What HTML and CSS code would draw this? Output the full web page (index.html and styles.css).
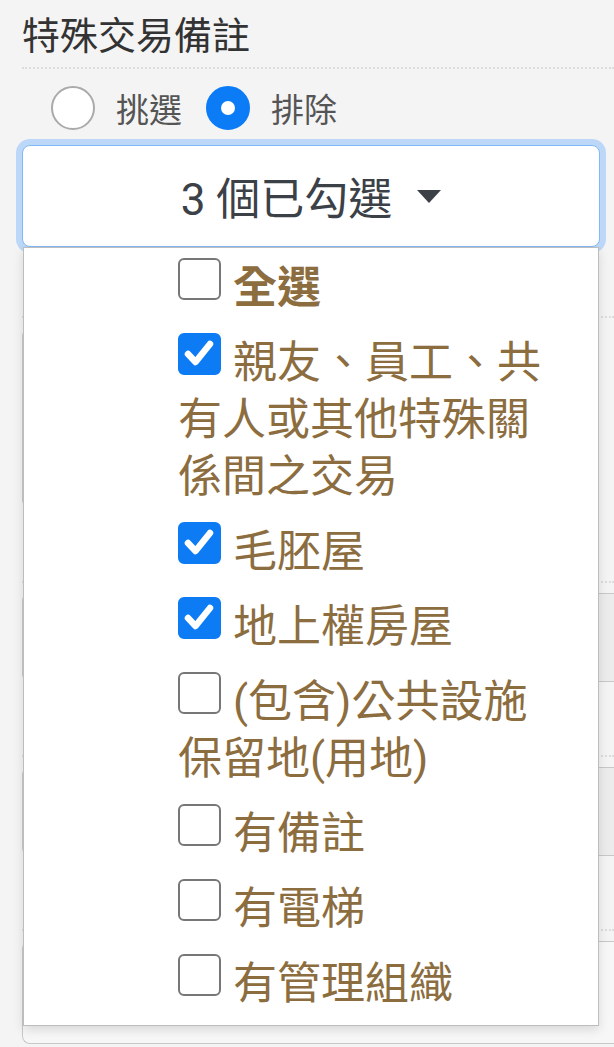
FILE: index.html
```html
<!DOCTYPE html>
<html lang="zh-Hant">
<head>
    <meta charset="UTF-8">
    <meta name="viewport" content="width=device-width, initial-scale=1.0">
    <title>特殊交易備註</title>
    <link rel="stylesheet" href="styles.css">
</head>
<body>
    <div class="page">
        <section class="field">
            <h2 class="field-title">特殊交易備註</h2>
            <div class="radios">
                <label class="radio"><span class="radio-dot"></span>挑選</label>
                <label class="radio"><span class="radio-dot checked"></span>排除</label>
            </div>
            <div class="dropdown">
                <button class="dropdown-toggle">3 個已勾選<span class="caret"></span></button>
                <ul class="dropdown-menu">
                    <li class="item all"><span class="box"></span>全選</li>
                    <li class="item"><span class="box checked"><svg viewBox="0 0 42 42"><polyline points="10,21 17.5,29 32,11"/></svg></span>親友、員工、共有人或其他特殊關係間之交易</li>
                    <li class="item"><span class="box checked"><svg viewBox="0 0 42 42"><polyline points="10,21 17.5,29 32,11"/></svg></span>毛胚屋</li>
                    <li class="item"><span class="box checked"><svg viewBox="0 0 42 42"><polyline points="10,21 17.5,29 32,11"/></svg></span>地上權房屋</li>
                    <li class="item"><span class="box"></span>(包含)公共設施保留地(用地)</li>
                    <li class="item"><span class="box"></span>有備註</li>
                    <li class="item"><span class="box"></span>有電梯</li>
                    <li class="item"><span class="box"></span>有管理組織</li>
                </ul>
            </div>
        </section>

        <section class="field first-below">
            <h2 class="field-title">總價</h2>
            <div class="range">
                <div class="input short"></div>
                <div class="input short"></div>
            </div>
        </section>

        <section class="field">
            <h2 class="field-title">單價</h2>
            <div class="input wide"></div>
        </section>

        <section class="field">
            <h2 class="field-title">建物面積</h2>
            <div class="input wide"></div>
        </section>

        <section class="field">
            <h2 class="field-title">土地面積</h2>
            <div class="input wide last"></div>
        </section>
    </div>
</body>
</html>
```

FILE: styles.css
```css
body {
    margin: 0;
    background: #f4f4f4;
    font-family: Roboto, "Noto Sans CJK TC", sans-serif;
    color: #333;
}
.page {
    padding: 11px 0 0 22px;
    overflow: hidden;
    height: 1047px;
    box-sizing: border-box;
}
.field-title {
    margin: 0;
    font-size: 38px;
    font-weight: normal;
    line-height: 50px;
    padding-bottom: 6px;
    border-bottom: 2px dotted #dcdcdc;
}
.field + .field .field-title {
    margin-top: 17px;
}
.field.first-below .field-title {
    margin-top: 13px;
}
.radios {
    display: flex;
    align-items: center;
    margin: 17px 0 0 29px;
    height: 44px;
}
.radio {
    display: flex;
    align-items: center;
    font-size: 33px;
    color: #555;
    margin-right: 24px;
}
.radio-dot {
    width: 40px;
    height: 40px;
    border: 2px solid #aaa;
    border-radius: 50%;
    background: #fff;
    margin-right: 21px;
    box-sizing: content-box;
}
.radio-dot.checked {
    border-color: #0b7bf6;
    background: #0b7bf6;
    position: relative;
}
.radio-dot.checked::after {
    content: "";
    position: absolute;
    left: 13px;
    top: 13px;
    width: 14px;
    height: 14px;
    border-radius: 50%;
    background: #fff;
}
.dropdown {
    position: relative;
    margin: 15px 14px 0 0;
}
.dropdown-toggle {
    display: flex;
    justify-content: center;
    align-items: center;
    width: 100%;
    height: 102px;
    background: #fff;
    border: 1px solid #80b9f7;
    border-radius: 8px;
    box-shadow: 0 0 0 6px #bcd7f8;
    font-family: inherit;
    font-size: 44px;
    color: #3b4147;
    padding: 0;
}
.caret {
    width: 0;
    height: 0;
    margin-left: 25px;
    border-top: 13px solid #3b4147;
    border-left: 12px solid transparent;
    border-right: 12px solid transparent;
}
.dropdown-menu {
    position: absolute;
    top: 100%;
    left: 1px;
    right: 1px;
    z-index: 2;
    margin: 0;
    padding: 3px 36px 3px 154px;
    list-style: none;
    background: #fff;
    border: 1px solid #bdbdbd;
    box-shadow: 0 4px 10px rgba(0, 0, 0, 0.12);
}
.item {
    padding: 9px 0;
    font-size: 44px;
    line-height: 57px;
    color: #8c6d40;
}
.item.all {
    font-weight: bold;
}
.box {
    display: inline-block;
    width: 43px;
    height: 42px;
    margin-right: 12px;
    vertical-align: -5px;
    transform: translateY(-8px);
    border: 2.5px solid #777;
    border-radius: 6px;
    box-sizing: border-box;
    background: #fff;
}
.box.checked {
    background: #0d7cf4;
    border-color: #0d7cf4;
}
.box svg {
    display: block;
    width: 42px;
    height: 42px;
    margin: -2.5px;
}
.box polyline {
    fill: none;
    stroke: #fff;
    stroke-width: 6.5;
    stroke-linecap: round;
    stroke-linejoin: round;
}
.range {
    display: flex;
    gap: 20px;
    margin-top: 10px;
}
.input {
    background: #ececec;
    border: 1px solid #c8c8c8;
    border-right: none;
    border-radius: 8px 0 0 8px;
    height: 89px;
    box-sizing: border-box;
}
.input.short {
    width: 240px;
    border-right: 1px solid #c8c8c8;
    border-radius: 8px;
    height: 180px;
}
.input.wide {
    margin-top: 10px;
}
.input.last {
    height: 103px;
    background: #f7f7f7;
}
```
